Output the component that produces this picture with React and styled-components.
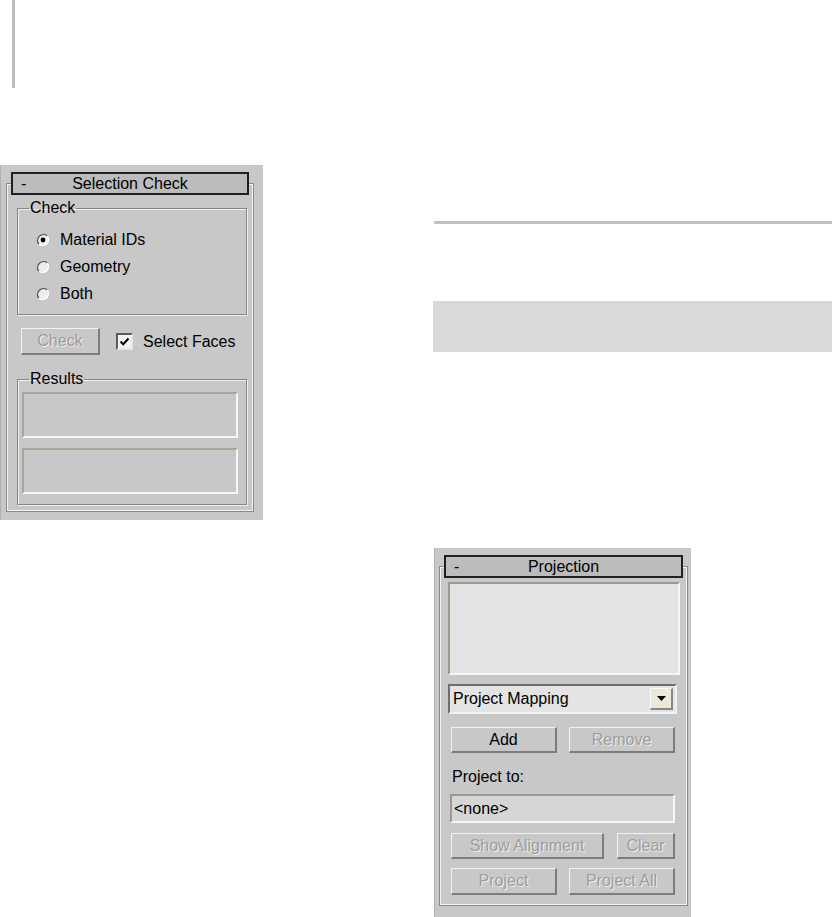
import React from 'react';
import styled, { createGlobalStyle } from 'styled-components';

const GlobalStyle = createGlobalStyle`
  html, body {
    margin: 0;
    padding: 0;
    background: #fff;
  }
  body {
    font-family: "Liberation Sans", Arial, sans-serif;
    font-size: 16px;
    color: #000;
  }
`;

function Radio({ checked }) {
  return (
    <svg width="14" height="14" viewBox="0 0 14 14">
      <circle cx="7" cy="7" r="6" fill="#ededed" />
      <path d="M2.8 11.2 A6 6 0 0 1 11.2 2.8" stroke="#555" strokeWidth="1.4" fill="none" />
      <path d="M11.2 2.8 A6 6 0 0 1 2.8 11.2" stroke="#ffffff" strokeWidth="1.4" fill="none" />
      {checked && <circle cx="7" cy="7" r="2.4" fill="#000" />}
    </svg>
  );
}

function Tick() {
  return (
    <svg width="11" height="11" viewBox="0 0 11 11">
      <path d="M1.5 5.5 L4.2 8.3 L9.5 2.5" stroke="#000" strokeWidth="2" fill="none" />
    </svg>
  );
}

function DownArrow() {
  return (
    <svg width="9" height="5" viewBox="0 0 9 5">
      <path d="M0 0 H9 L4.5 5 Z" fill="#000" />
    </svg>
  );
}

function SelectionCheck() {
  return (
    <Panel $pad="8px">
      <Rollout $left="5px" $right="9px">
        <Header>
          <Minus>-</Minus>
          <span>Selection Check</span>
        </Header>
        <RolloutBody $pad="0 6px 6px 10px">
          <Group $top="4px">
            <GroupLabel>Check</GroupLabel>
            <RadioList>
              <Option>
                <Radio checked />
                Material IDs
              </Option>
              <Option>
                <Radio />
                Geometry
              </Option>
              <Option>
                <Radio />
                Both
              </Option>
            </RadioList>
          </Group>
          <CheckRow>
            <Button $w="79px" $h="27px" disabled>
              Check
            </Button>
            <CheckLabel>
              <CheckBox>
                <Tick />
              </CheckBox>
              Select Faces
            </CheckLabel>
          </CheckRow>
          <Group $top="15px">
            <GroupLabel>Results</GroupLabel>
            <ResultList>
              <Well />
              <Well />
            </ResultList>
          </Group>
        </RolloutBody>
      </Rollout>
    </Panel>
  );
}

function Projection() {
  return (
    <Panel $pad="12px" $shift="1px">
      <Rollout $left="4px" $right="3px">
        <Header>
          <Minus>-</Minus>
          <span>Projection</span>
        </Header>
        <RolloutBody $pad="4px 0 10px 8px">
          <Preview />
          <Dropdown>
            <span>Project Mapping</span>
            <DropButton>
              <DownArrow />
            </DropButton>
          </Dropdown>
          <ButtonRow $top="13px" $gap="12px">
            <Button $w="106px" $h="26px">Add</Button>
            <Button $w="106px" $h="26px" disabled>
              Remove
            </Button>
          </ButtonRow>
          <FieldLabel>Project to:</FieldLabel>
          <Field>&lt;none&gt;</Field>
          <ButtonRow $top="10px" $gap="13px">
            <Button $w="153px" $h="26px" disabled>
              Show Alignment
            </Button>
            <Button $w="58px" $h="26px" disabled>
              Clear
            </Button>
          </ButtonRow>
          <ButtonRow $top="9px" $gap="12px">
            <Button $w="106px" $h="27px" disabled>
              Project
            </Button>
            <Button $w="106px" $h="27px" disabled>
              Project All
            </Button>
          </ButtonRow>
        </RolloutBody>
      </Rollout>
    </Panel>
  );
}

export default function App() {
  return (
    <Page>
      <GlobalStyle />
      <TopRule />
      <Columns>
        <SelectionCheck />
        <RightColumn>
          <Rule />
          <GreyBar />
          <Projection />
        </RightColumn>
      </Columns>
    </Page>
  );
}

const Page = styled.div`
  width: 832px;
  height: 917px;
  overflow: hidden;
`;

const TopRule = styled.div`
  margin-left: 12px;
  width: 0;
  height: 88px;
  border-left: 3px solid #bdbdbd;
`;

const Columns = styled.div`
  display: grid;
  grid-template-columns: 263px 399px;
  column-gap: 170px;
  align-items: start;
  margin-top: 77px;
`;

const RightColumn = styled.div`
  display: flex;
  flex-direction: column;
`;

const Rule = styled.div`
  margin: 56px 0 0 1px;
  height: 3px;
  background: #c0c0c0;
`;

const GreyBar = styled.div`
  margin-top: 77px;
  height: 51px;
  background: #d9d9d9;
`;

const Panel = styled.div`
  background: #c8c8c8;
  padding: 18px 0 ${(p) => p.$pad} 0;
  margin-left: ${(p) => p.$shift || '0'};
  border-left: 1px solid #b0b0b0;
  ${(p) => (p.$shift ? 'margin-top: 196px; width: 256px;' : '')}
`;

const Rollout = styled.div`
  margin: 0 ${(p) => p.$right} 0 ${(p) => p.$left};
  border: 1px solid #8a8a8a;
  box-shadow: inset 0 0 0 1px #f2f2f2;
`;

const Header = styled.div`
  display: grid;
  grid-template-columns: 1fr auto 1fr;
  align-items: center;
  height: 23px;
  margin: -12px 4px 0 4px;
  box-sizing: border-box;
  border: 2px solid #202020;
  background: #bcbcbc;
  font-size: 16px;
  line-height: 19px;
`;

const Minus = styled.span`
  padding-left: 8px;
`;

const RolloutBody = styled.div`
  padding: ${(p) => p.$pad};
  display: flex;
  flex-direction: column;
  align-items: flex-start;
`;

const Group = styled.fieldset`
  margin: ${(p) => p.$top} 0 0 0;
  padding: 0;
  width: 230px;
  box-sizing: border-box;
  min-width: 0;
  border: 1px solid #858585;
  box-shadow: inset 1px 1px 0 #f0f0f0, 1px 1px 0 #f0f0f0;
`;

const GroupLabel = styled.legend`
  margin-left: 11px;
  padding: 0 1px;
  font-size: 16px;
  line-height: 18px;
`;

const RadioList = styled.div`
  display: flex;
  flex-direction: column;
  padding: 9px 0 7px 18px;
`;

const Option = styled.label`
  display: flex;
  align-items: center;
  gap: 10px;
  height: 27px;
  line-height: 18px;
`;

const CheckRow = styled.div`
  display: flex;
  align-items: center;
  gap: 16px;
  margin: 13px 0 0 4px;
`;

const CheckLabel = styled.label`
  display: flex;
  align-items: center;
  gap: 10px;
`;

const CheckBox = styled.span`
  display: flex;
  align-items: center;
  justify-content: center;
  width: 17px;
  height: 17px;
  box-sizing: border-box;
  background: #f4f4f4;
  border-style: solid;
  border-width: 2px;
  border-color: #5a5a5a #e6e6e6 #e6e6e6 #5a5a5a;
`;

const Button = styled.button`
  width: ${(p) => p.$w};
  height: ${(p) => p.$h};
  box-sizing: border-box;
  padding: 0;
  background: #c8c8c8;
  font-family: inherit;
  font-size: 16px;
  color: #000;
  border-style: solid;
  border-width: 1px 2px 2px 1px;
  border-color: #f2f2f2 #7c7c7c #7c7c7c #f2f2f2;
  &:disabled {
    color: #9d9d9d;
    text-shadow: 1px 1px 0 #efefef;
  }
`;

const ResultList = styled.div`
  display: flex;
  flex-direction: column;
  gap: 10px;
  padding: 4px 0 10px 4px;
`;

const Well = styled.div`
  width: 216px;
  height: 46px;
  box-sizing: border-box;
  border-style: solid;
  border-width: 2px;
  border-color: #aaa596 #f6f6f6 #f6f6f6 #aaa596;
`;

const Preview = styled.div`
  width: 232px;
  height: 93px;
  box-sizing: border-box;
  background: #e3e3e3;
  border-style: solid;
  border-width: 2px;
  border-color: #9e9a8b #f6f6f6 #f6f6f6 #9e9a8b;
`;

const Dropdown = styled.div`
  display: flex;
  align-items: center;
  justify-content: space-between;
  width: 229px;
  height: 30px;
  margin-top: 9px;
  box-sizing: border-box;
  padding: 0 2px 0 3px;
  background: #e4e4e4;
  border-style: solid;
  border-width: 2px;
  border-color: #6e6e6e #f2f2f2 #f2f2f2 #6e6e6e;
`;

const DropButton = styled.span`
  display: flex;
  align-items: center;
  justify-content: center;
  width: 23px;
  height: 22px;
  box-sizing: border-box;
  background: #ece9d8;
  border-style: solid;
  border-width: 1px 2px 2px 1px;
  border-color: #fbfbf6 #8a887c #8a887c #fbfbf6;
`;

const ButtonRow = styled.div`
  display: flex;
  gap: ${(p) => p.$gap};
  margin: ${(p) => p.$top} 0 0 3px;
`;

const FieldLabel = styled.div`
  margin: 15px 0 0 4px;
  line-height: 18px;
`;

const Field = styled.div`
  width: 225px;
  height: 29px;
  margin: 8px 0 0 2px;
  box-sizing: border-box;
  padding-left: 2px;
  display: flex;
  align-items: center;
  background: #d6d6d6;
  border-style: solid;
  border-width: 2px;
  border-color: #9e9a8b #f6f6f6 #f6f6f6 #9e9a8b;
`;
